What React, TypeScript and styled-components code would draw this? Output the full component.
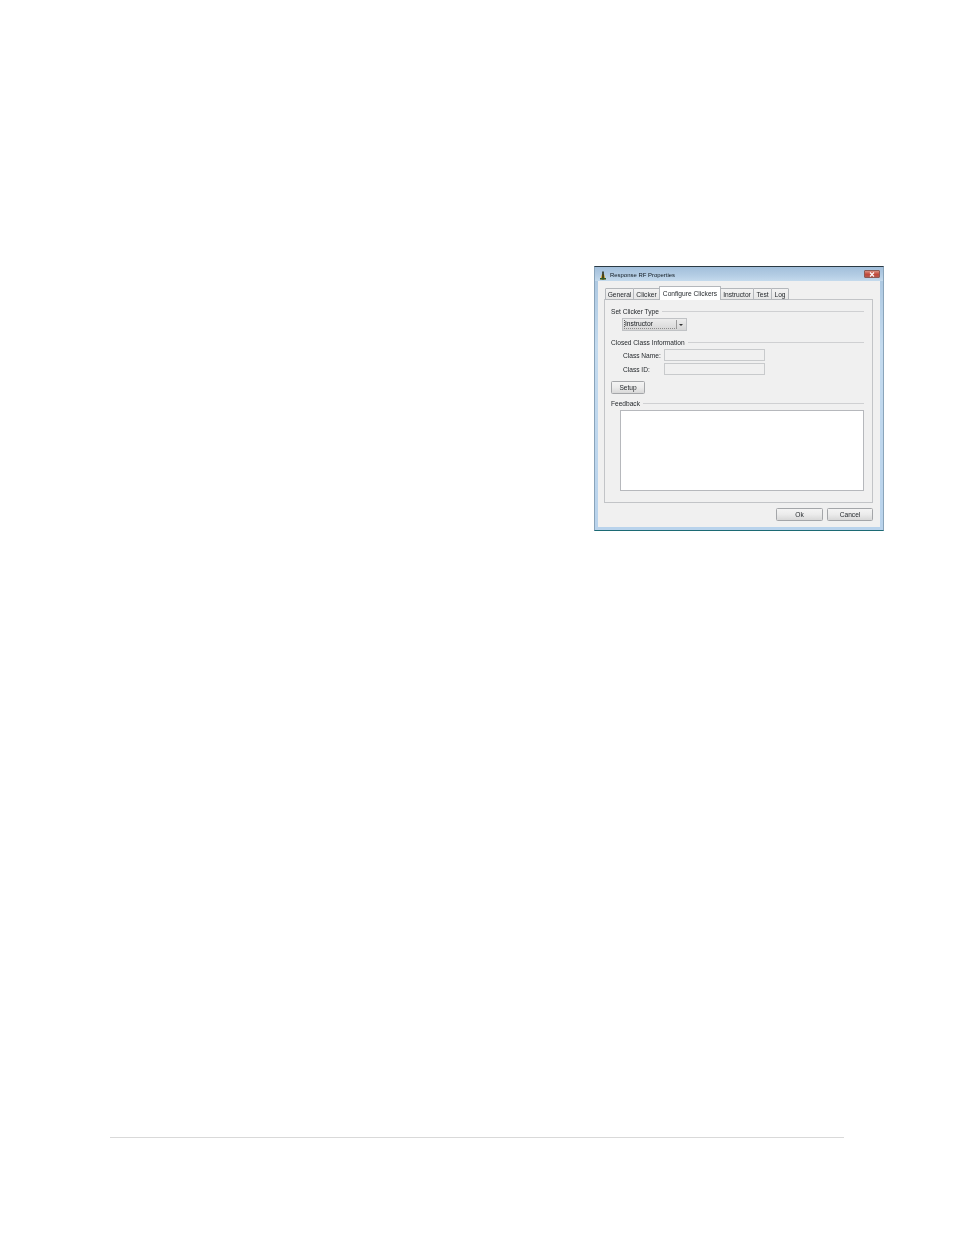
import React from "react";
import styled, { createGlobalStyle } from "styled-components";

const Global = createGlobalStyle`
  html, body { margin: 0; padding: 0; background: #fff; }
  body { font-family: "Liberation Sans", Arial, sans-serif; }
  * { box-sizing: border-box; }
`;

const Page = styled.div`
  width: 954px;
  height: 1235px;
  padding: 266px 70px 0 110px;
  display: flex;
  flex-direction: column;
  background: #fff;
`;

const WindowRow = styled.div`
  display: flex;
  justify-content: flex-end;
  height: 265px;
`;

const Win = styled.div`
  width: 290px;
  height: 265px;
  display: flex;
  flex-direction: column;
  background: linear-gradient(180deg, #a9c5df 0%, #c4dbef 30%, #b9d3ec 100%);
  border-top: 1px solid #2b3a44;
  border-bottom: 1px solid #1c6a74;
  border-left: 1px solid #8aa4ba;
  border-right: 1px solid #8aa4ba;
  filter: blur(0.2px);
`;

const TitleBar = styled.div`
  height: 14px;
  flex: none;
  display: flex;
  align-items: center;
  padding: 2px 3px 0 4px;
  gap: 3px;
  font-size: 5.95px;
  color: #10181f;
  background: linear-gradient(180deg, #a2bfdb 0%, #b4cde4 60%, #c4daed 100%);
`;

const TitleText = styled.span`
  flex: 1;
`;

const CloseBtn = styled.div`
  width: 16px;
  height: 8px;
  margin-top: -2px;
  border: 1px solid #8b5a55;
  border-radius: 1px;
  background: linear-gradient(180deg, #d98f80 0%, #c2483a 55%, #b55a50 100%);
  display: flex;
  align-items: center;
  justify-content: center;
`;

const Client = styled.div`
  flex: 1;
  margin: 0 3px 3px 3px;
  background: #f0f0f0;
  padding: 5px 7px 0 6px;
  display: flex;
  flex-direction: column;
`;

const Tabs = styled.div`
  display: flex;
  align-items: flex-end;
  height: 14px;
  flex: none;
  padding-left: 2px;
  position: relative;
  z-index: 1;
  margin-bottom: -1px;
`;

const Tab = styled.div<{ $w: number; $active?: boolean }>`
  width: ${(p) => p.$w}px;
  height: ${(p) => (p.$active ? 14 : 12)}px;
  font-size: 6.65px;
  color: #1f2327;
  display: flex;
  align-items: center;
  justify-content: center;
  border: 1px solid #b4b7bb;
  border-bottom: ${(p) => (p.$active ? "none" : "1px solid #b4b7bb")};
  margin-left: -1px;
  border-radius: 1px 1px 0 0;
  background: ${(p) =>
    p.$active ? "#fff" : "linear-gradient(180deg, #f2f2f2 0%, #e6e6e6 100%)"};
`;

const Panel = styled.div`
  width: 269px;
  height: 204px;
  flex: none;
  border: 1px solid #c2c4c7;
  background: #f0f0f0;
  padding: 6px 8px 0 6px;
  display: flex;
  flex-direction: column;
`;

const Legend = styled.div<{ $top?: number }>`
  height: 11px;
  margin-top: ${(p) => p.$top ?? 0}px;
  display: flex;
  align-items: center;
  gap: 3px;
  font-size: 6.6px;
  color: #1f2327;
  white-space: nowrap;
  &::after {
    content: "";
    flex: 1;
    height: 1px;
    background: #cfd0d2;
  }
`;

const Combo = styled.div`
  width: 65px;
  height: 13px;
  margin: 1px 0 0 11px;
  border: 1px solid #c0c2c5;
  background: linear-gradient(180deg, #ececec 0%, #d6d6d6 100%);
  display: flex;
  padding: 1px;
`;

const ComboValue = styled.div`
  width: 53px;
  font-size: 6.7px;
  color: #14181c;
  line-height: 8px;
  border-bottom: 1px dotted #8a8a8a;
  border-left: 1px dotted #5c5c5c;
  border-right: 1px solid #9a9a9a;
`;

const ComboArrow = styled.div`
  flex: 1;
  display: flex;
  align-items: center;
  justify-content: center;
  &::after {
    content: "";
    border-left: 2px solid transparent;
    border-right: 2px solid transparent;
    border-top: 2.5px solid #333;
  }
`;

const Field = styled.div<{ $top: number }>`
  display: flex;
  align-items: center;
  height: 12px;
  margin: ${(p) => p.$top}px 0 0 12px;
  font-size: 6.6px;
  color: #24282c;
`;

const FieldLabel = styled.span`
  width: 41px;
  flex: none;
  white-space: nowrap;
`;

const TextInput = styled.div`
  width: 101px;
  height: 12px;
  border: 1px solid #c8cacc;
  background: #f0f0f0;
`;

const Button = styled.div<{ $w: number }>`
  width: ${(p) => p.$w}px;
  height: 13px;
  border: 1px solid #a4a6a9;
  border-radius: 1.5px;
  display: flex;
  align-items: center;
  justify-content: center;
  font-size: 6.6px;
  color: #1f2327;
  background: linear-gradient(180deg, #f4f4f4 0%, #ebebeb 50%, #d8d8d8 100%);
`;

const SetupRow = styled.div`
  margin: 6px 0 4px 0;
`;

const Feedback = styled.div`
  width: 244px;
  height: 81px;
  margin: 1px 0 0 9px;
  background: #fff;
  border: 1px solid #b6b8bc;
`;

const Footer = styled.div`
  display: flex;
  justify-content: flex-end;
  gap: 4px;
  width: 269px;
  margin-top: 5px;
`;

const Rule = styled.div`
  width: 734px;
  height: 1px;
  margin-top: 606px;
  background: #d9d9d9;
  flex: none;
`;

const AppIcon = () => (
  <svg width="8" height="9" viewBox="0 0 8 9">
    <path d="M1.5 8.5 L3 3 L5 3 L6.5 8.5 Z" fill="#d0a020" />
    <rect x="3.2" y="0.5" width="1.6" height="8" fill="#2a2f1a" />
    <rect x="1" y="7" width="6" height="1.5" fill="#2f5a2a" />
  </svg>
);

export default function App() {
  return (
    <Page>
      <Global />
      <WindowRow>
        <Win>
          <TitleBar>
            <AppIcon />
            <TitleText>Response RF Properties</TitleText>
            <CloseBtn>
              <svg width="6" height="5" viewBox="0 0 6 5">
                <path d="M1 0.5 L5 4.5 M5 0.5 L1 4.5" stroke="#fff" strokeWidth="1.1" />
              </svg>
            </CloseBtn>
          </TitleBar>
          <Client>
            <Tabs>
              <Tab $w={29}>General</Tab>
              <Tab $w={27}>Clicker</Tab>
              <Tab $w={62} $active>Configure Clickers</Tab>
              <Tab $w={34}>Instructor</Tab>
              <Tab $w={19}>Test</Tab>
              <Tab $w={18}>Log</Tab>
            </Tabs>
            <Panel>
              <Legend>Set Clicker Type</Legend>
              <Combo>
                <ComboValue>Instructor</ComboValue>
                <ComboArrow />
              </Combo>
              <Legend $top={6}>Closed Class Information</Legend>
              <Field $top={1}>
                <FieldLabel>Class Name:</FieldLabel>
                <TextInput />
              </Field>
              <Field $top={2}>
                <FieldLabel>Class ID:</FieldLabel>
                <TextInput />
              </Field>
              <SetupRow>
                <Button $w={34}>Setup</Button>
              </SetupRow>
              <Legend>Feedback</Legend>
              <Feedback />
            </Panel>
            <Footer>
              <Button $w={47}>Ok</Button>
              <Button $w={46}>Cancel</Button>
            </Footer>
          </Client>
        </Win>
      </WindowRow>
      <Rule />
    </Page>
  );
}
